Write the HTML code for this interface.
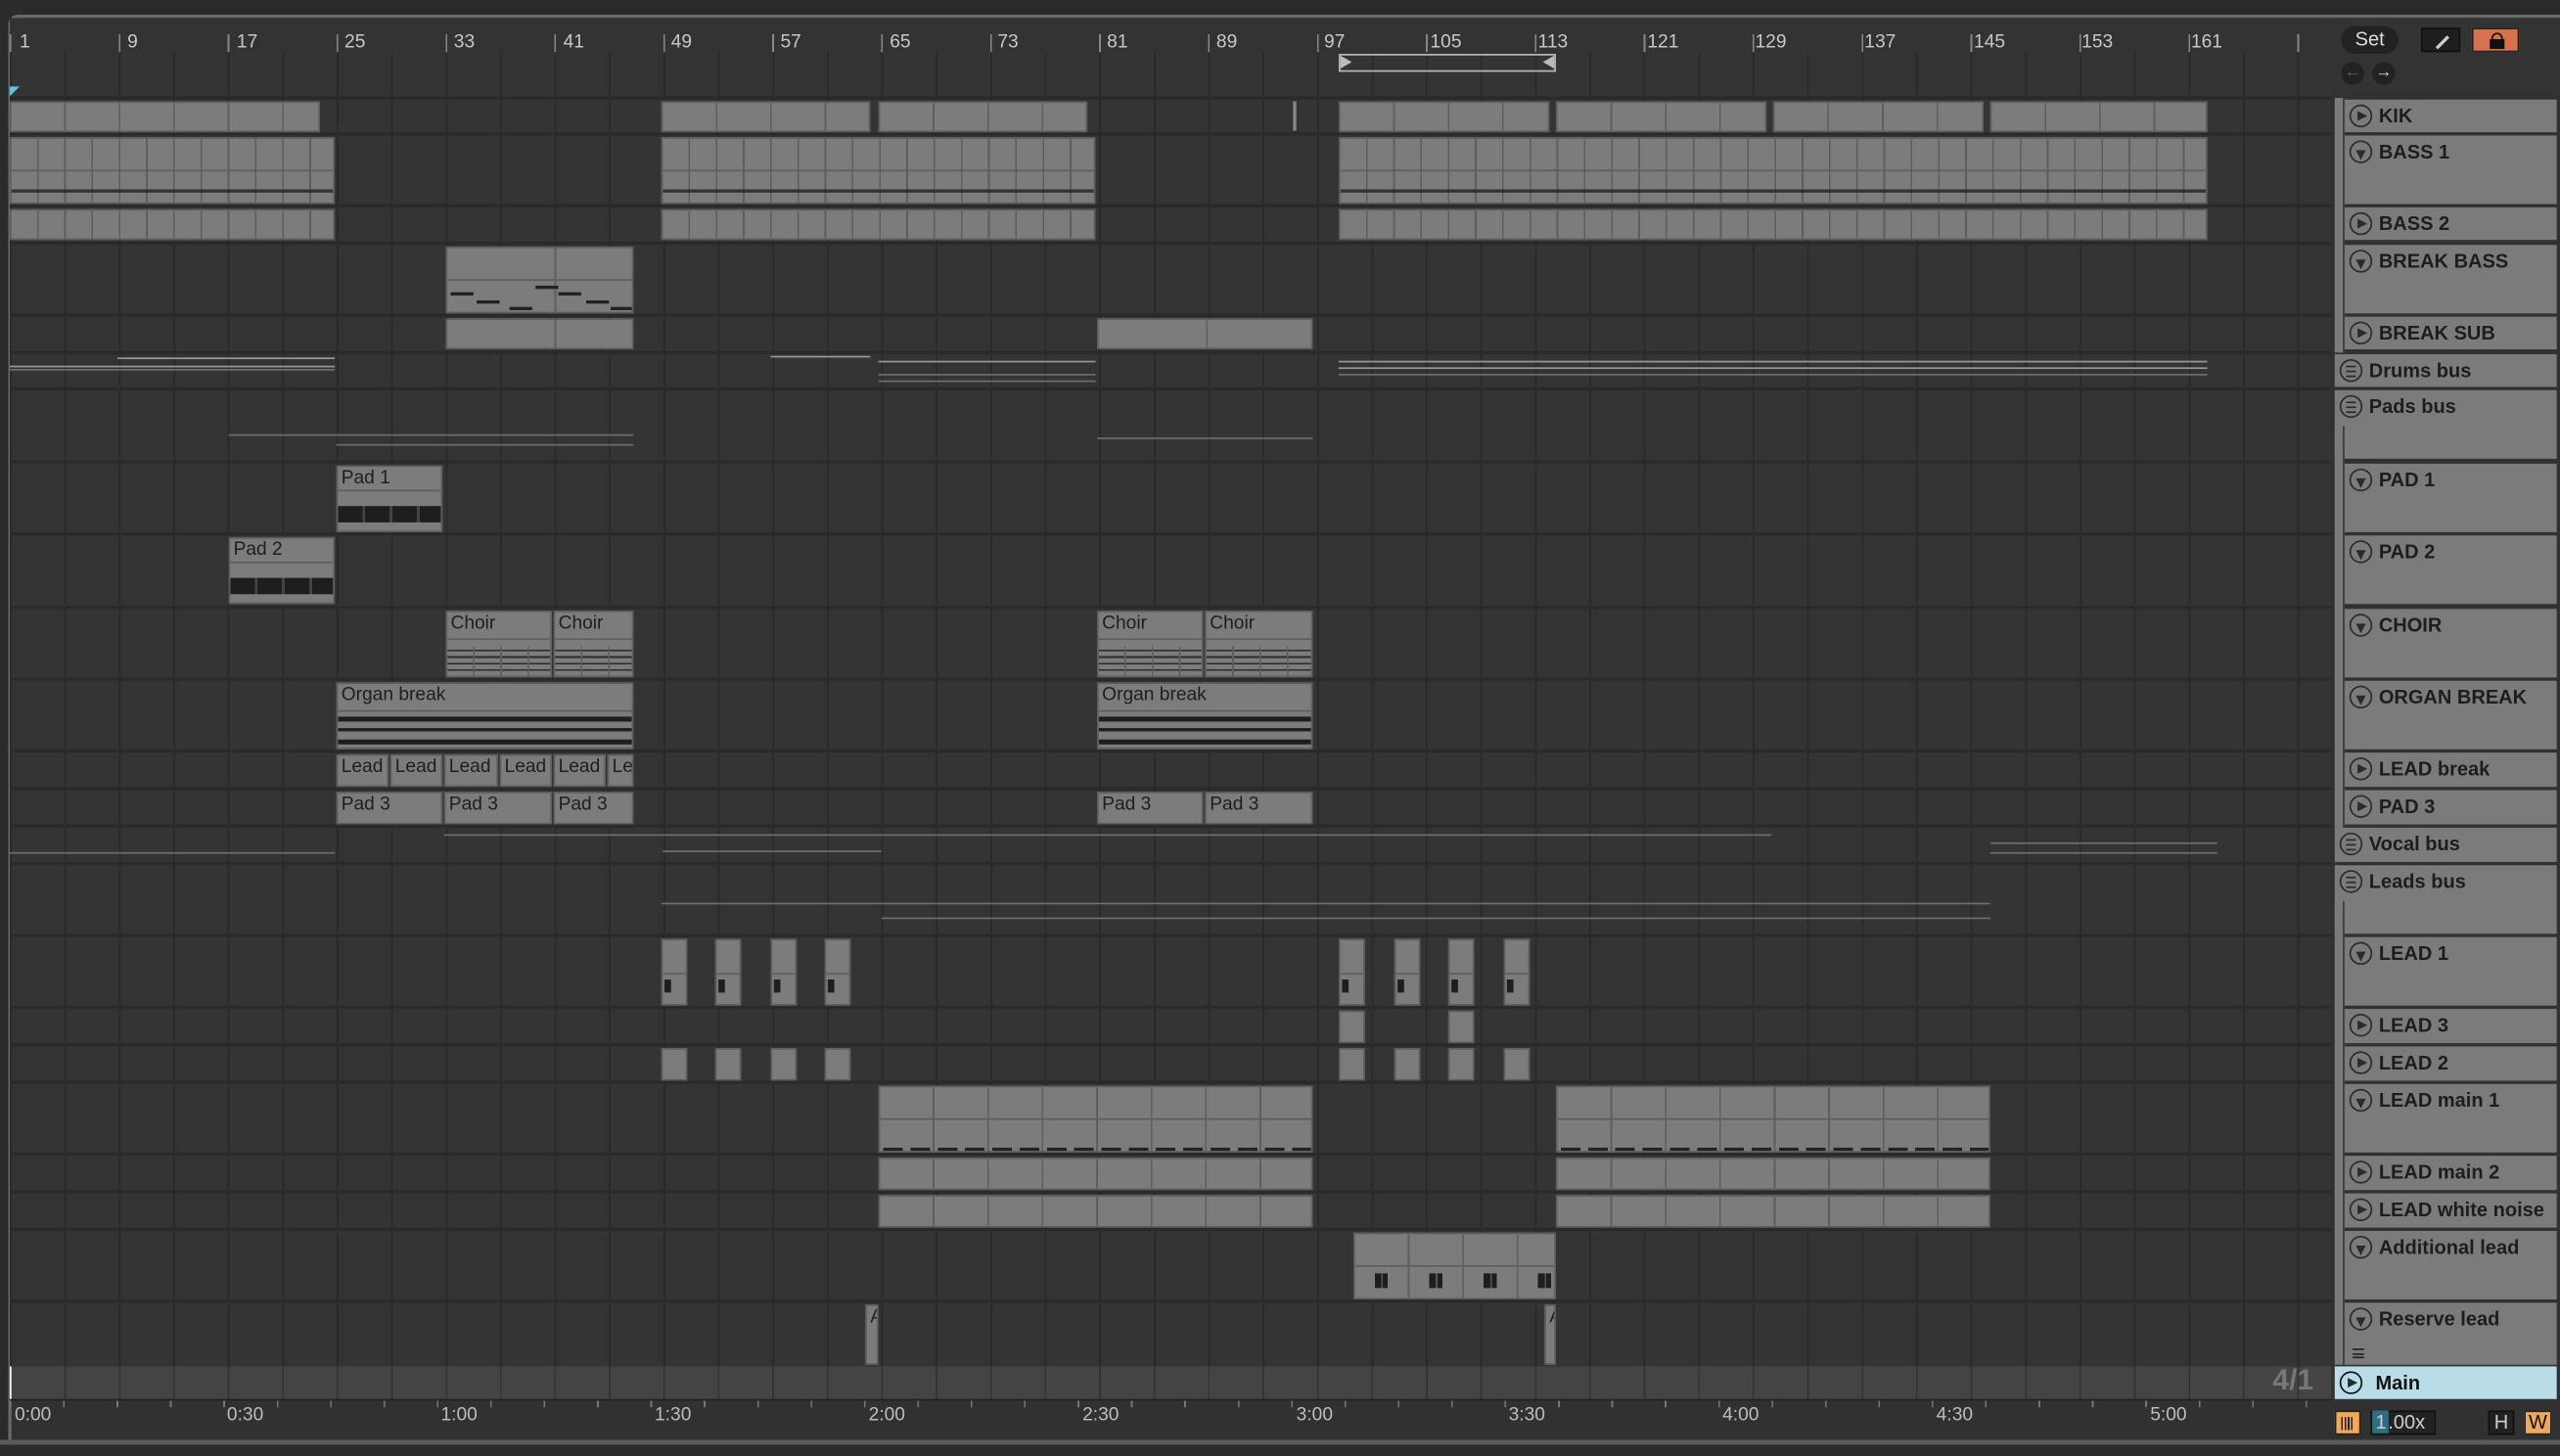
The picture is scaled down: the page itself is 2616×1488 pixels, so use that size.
<!DOCTYPE html>
<html><head><meta charset="utf-8"><style>
*{margin:0;padding:0;box-sizing:border-box}
html,body{width:2616px;height:1488px;overflow:hidden;background:#262626}
.s{position:absolute;left:0;top:0;width:1568px;height:892px;transform:scale(1.66837);transform-origin:0 0;font-family:"Liberation Sans",sans-serif;background:#2a2a2a}
.frame{position:absolute;left:5px;top:9px;width:1563px;height:875px;border-top:2px solid #6a6a6a;border-left:2px solid #6a6a6a;border-radius:6px 0 0 0;background:#313131}
.ruler{position:absolute;left:6px;top:11px;width:1422px;height:47px;background:#333}
.rl{position:absolute;top:20px;font-size:11.5px;color:#c8c8c8;white-space:nowrap}
.area{position:absolute;left:6px;top:32px;width:1422px;height:805px;
background-image:repeating-linear-gradient(90deg,#2a2a2a 0 1.2px,transparent 1.2px 33.36px);background-color:#343434}
.sep{position:absolute;left:6px;width:1422px;height:2px;background:#2a2a2a}
.c{position:absolute;background:#7c7c7c;border:1px solid #5e5e5e;overflow:hidden}
.c span{position:absolute;left:2px;top:1px;font-size:11.5px;color:#1e1e1e;white-space:nowrap}
.hd{position:absolute;left:1436px;width:130px;background:#7b7b7b;color:#1d1d1d;font-size:12px;font-weight:bold}
.hd.b{left:1430px;width:136px}
.hd i{position:absolute;left:3px;top:3px;width:14px;height:14px;border:1.3px solid #2a2a2a;border-radius:50%}
.hd i.p:after{content:"";position:absolute;left:4px;top:2.5px;border-left:6px solid #2a2a2a;border-top:3.5px solid transparent;border-bottom:3.5px solid transparent}
.hd i.d:after{content:"";position:absolute;left:2.5px;top:4.5px;border-top:6px solid #2a2a2a;border-left:3.5px solid transparent;border-right:3.5px solid transparent}
.hd i.m:after{content:"";position:absolute;left:3px;top:3px;width:6px;height:5px;border-top:1.2px solid #2a2a2a;border-bottom:1.2px solid #2a2a2a;background:linear-gradient(#2a2a2a,#2a2a2a) 0 50%/100% 1.2px no-repeat}
.hd b{position:absolute;left:21px;top:3px;font-weight:bold;white-space:nowrap}
.gl{position:absolute;left:1430px;width:6px;background:#7b7b7b;border-right:1px solid #3a3a3a}
.tl{position:absolute;top:861px;font-size:11.5px;color:#bdbdbd}
.ln{position:absolute;height:1px;background:#9a9a9a}
</style></head><body><div class="s">
<div class="frame"></div>
<div class="ruler"></div>
<div class="rl" style="left:12px">1</div><div class="rl" style="left:78px">9</div><div class="rl" style="left:145px">17</div><div class="rl" style="left:211px">25</div><div class="rl" style="left:278px">33</div><div class="rl" style="left:345px">41</div><div class="rl" style="left:411px">49</div><div class="rl" style="left:478px">57</div><div class="rl" style="left:545px">65</div><div class="rl" style="left:611px">73</div><div class="rl" style="left:678px">81</div><div class="rl" style="left:745px">89</div><div class="rl" style="left:811px">97</div><div class="rl" style="left:876px">105</div><div class="rl" style="left:942px">113</div><div class="rl" style="left:1009px">121</div><div class="rl" style="left:1075px">129</div><div class="rl" style="left:1142px">137</div><div class="rl" style="left:1209px">145</div><div class="rl" style="left:1275px">153</div><div class="rl" style="left:1342px">161</div>
<div style="position:absolute;left:6px;top:21px;width:1422px;height:11px;background-image:repeating-linear-gradient(90deg,#888 0 1px,transparent 1px 66.72px)"></div>
<div class="area" id="area"></div>
<div style="position:absolute;left:820px;top:33px;width:133px;height:11px;border:1px solid #bbb"></div>
<div style="position:absolute;left:821px;top:34px;border-left:7px solid #bbb;border-top:4px solid transparent;border-bottom:4px solid transparent"></div>
<div style="position:absolute;left:945px;top:34px;border-right:7px solid #bbb;border-top:4px solid transparent;border-bottom:4px solid transparent"></div>
<div style="position:absolute;left:6px;top:53px;border-left:6px solid #5bc4dc;border-bottom:6px solid transparent"></div>
<div id="clips"></div>
<div style="position:absolute;left:1428px;top:11px;width:140px;height:47px;background:#333"></div>
<div style="position:absolute;left:1434px;top:16px;width:35px;height:17px;border-radius:9px;background:#222;color:#ddd;font-size:12px;text-align:center;line-height:17px">Set</div>
<div style="position:absolute;left:1483px;top:17px;width:24px;height:15px;background:#1e1e1e;border:1px solid #111"><div style="position:absolute;left:7px;top:7px;width:10px;height:2px;background:#ccc;transform:rotate(-45deg)"></div></div>
<div style="position:absolute;left:1514px;top:17px;width:29px;height:15px;background:#d8714f;border:1px solid #222"><div style="position:absolute;left:10px;top:6px;width:9px;height:6px;background:#111"></div><div style="position:absolute;left:11px;top:2px;width:7px;height:6px;border:1.5px solid #111;border-radius:4px 4px 0 0"></div></div>
<div style="position:absolute;left:1434px;top:38px;width:14px;height:14px;border-radius:50%;background:#222;color:#666;font-size:10px;text-align:center;line-height:14px">&#8592;</div>
<div style="position:absolute;left:1453px;top:38px;width:14px;height:14px;border-radius:50%;background:#222;color:#ddd;font-size:10px;text-align:center;line-height:14px">&#8594;</div>
<div id="hds"></div>
<div class="gl" style="top:60px;height:156px"></div>
<div class="gl" style="top:261px;height:246px"></div>
<div class="gl" style="top:552px;height:284px"></div>
<div style="position:absolute;left:6px;top:837px;width:1422px;height:20px;background:#444;background-image:repeating-linear-gradient(90deg,#333 0 1px,transparent 1px 33.36px)"></div>
<div style="position:absolute;left:6px;top:837px;width:1px;height:20px;background:#fff"></div>
<div style="position:absolute;left:1392px;top:835px;font-size:18px;font-weight:bold;color:#777">4/1</div>
<div class="hd b" style="top:837px;height:20px;background:#b8dde8;color:#111;font-weight:bold"><i class="p" style="border-color:#111;top:3px;left:3px"></i><b style="left:25px;top:2.5px;font-size:12px">Main</b></div>
<div style="position:absolute;left:6px;top:857px;width:1422px;height:1px;background:#222"></div>
<div style="position:absolute;left:6px;top:858px;width:1422px;height:4px;background-image:repeating-linear-gradient(90deg,#777 0 1px,transparent 1px 32.7px)"></div>
<div class="tl" style="left:9px">0:00</div><div class="tl" style="left:139px">0:30</div><div class="tl" style="left:270px">1:00</div><div class="tl" style="left:401px">1:30</div><div class="tl" style="left:532px">2:00</div><div class="tl" style="left:663px">2:30</div><div class="tl" style="left:794px">3:00</div><div class="tl" style="left:924px">3:30</div><div class="tl" style="left:1055px">4:00</div><div class="tl" style="left:1186px">4:30</div><div class="tl" style="left:1317px">5:00</div>
<div style="position:absolute;left:1430px;top:864px;width:16px;height:15px;background:#f0a859;border:1px solid #222"><div style="position:absolute;left:3px;top:3px;width:8px;height:8px;background:repeating-linear-gradient(90deg,#222 0 1px,transparent 1px 2px)"></div></div>
<div style="position:absolute;left:1452px;top:864px;width:40px;height:15px;background:#222;border:1px solid #111;color:#ccc;font-size:12px;line-height:13px"><span style="background:#2e6e80;padding:0 1px 0 2px">1</span>.00x</div>
<div style="position:absolute;left:1524px;top:864px;width:16px;height:15px;background:#222;border:1px solid #111;color:#ccc;font-size:12px;text-align:center;line-height:13px">H</div>
<div style="position:absolute;left:1546px;top:864px;width:17px;height:15px;background:#f0a859;border:1px solid #222;color:#111;font-size:12px;text-align:center;line-height:13px">W</div>
<div style="position:absolute;left:0;top:882px;width:1568px;height:3px;background:#5a5a5a"></div>
<script>
var rows=[[61,20,'KIK','p',0],[83,42,'BASS 1','d',0],[127,20,'BASS 2','p',0],[150,42,'BREAK BASS','d',0],[194,20,'BREAK SUB','p',0],[217,20,'Drums bus','m',1],[239,42,'Pads  bus','m',1],[284,42,'PAD 1','d',0],[328,42,'PAD 2','d',0],[373,42,'CHOIR','d',0],[417,42,'ORGAN BREAK','d',0],[461,21,'LEAD break','p',0],[484,21,'PAD 3','p',0],[507,21,'Vocal bus','m',1],[530,42,'Leads bus','m',1],[574,42,'LEAD 1','d',0],[618,21,'LEAD 3','p',0],[641,21,'LEAD 2','p',0],[664,42,'LEAD main 1','d',0],[708,21,'LEAD main 2','p',0],[731,21,'LEAD white noise','p',0],[754,42,'Additional lead','d',0],[798,38,'Reserve lead','d',0]];
var H='',C='';
rows.forEach(function(r){H+='<div class="hd'+(r[4]?' b':'')+'" style="top:'+r[0]+'px;height:'+r[1]+'px"><i class="'+r[3]+'"></i><b>'+r[2]+'</b></div>';C+='<div class="sep" style="top:'+(r[0]-2)+'px"></div>';});
H+='<div style="position:absolute;left:1441px;top:826px;width:7px;height:6px;border-top:1px solid #222;border-bottom:1px solid #222;background:linear-gradient(#222,#222) 0 50%/100% 1px no-repeat"></div>';
document.getElementById('hds').innerHTML=H;
function c(x1,x2,y,h,lab,sub,notes){C+='<div class="c" style="left:'+x1+'px;top:'+y+'px;width:'+(x2-x1)+'px;height:'+h+'px;'+(sub?'background-image:repeating-linear-gradient(90deg,transparent 0 '+(sub-1)+'px,#5e5e5e '+(sub-1)+'px '+sub+'px);':'')+'">'+(lab?'<span>'+lab+'</span>':'')+(notes||'')+'</div>';}
var R={};rows.forEach(function(r){R[r[2]]=r;});
function row(n,x1,x2,lab,sub,notes){var r=R[n];c(x1,x2,r[0]+1,r[1]-1,lab,sub,notes);}
function segs(n,arr,sub,notes){arr.forEach(function(a){row(n,a[0],a[1],'',sub,notes);});}
segs('KIK',[[6,196],[405,533],[538,666],[820,949],[953,1082],[1086,1215],[1219,1352]],33.36);
C+='<div style="position:absolute;left:792px;top:62px;width:2px;height:18px;background:#888"></div>';
var bn='<div style="position:absolute;left:0;right:0;top:19px;height:1px;background:#5e5e5e"></div><div style="position:absolute;left:0;right:0;top:31px;height:2px;background:#222;opacity:.8"></div>';
segs('BASS 1',[[6,205],[405,671],[820,1352]],16.68,bn);
segs('BASS 2',[[6,205],[405,671],[820,1352]],16.68);
row('BREAK BASS',273,388,'',66.7,'<div style="position:absolute;left:0;right:0;top:19px;height:1px;background:#5e5e5e"></div><div style="position:absolute;left:2px;top:27px;width:14px;height:2px;background:#222"></div><div style="position:absolute;left:18px;top:32px;width:14px;height:2px;background:#222"></div><div style="position:absolute;left:38px;top:36px;width:14px;height:2px;background:#222"></div><div style="position:absolute;left:54px;top:23px;width:14px;height:2px;background:#222"></div><div style="position:absolute;left:68px;top:27px;width:14px;height:2px;background:#222"></div><div style="position:absolute;left:85px;top:32px;width:14px;height:2px;background:#222"></div><div style="position:absolute;left:100px;top:36px;width:14px;height:2px;background:#222"></div>');
segs('BREAK SUB',[[273,388],[672,804]],66.7);
[[6,205,224],[72,205,219],[472,533,218],[538,671,221],[820,1352,221],[820,1352,225]].forEach(function(a){C+='<div class="ln" style="left:'+a[0]+'px;width:'+(a[1]-a[0])+'px;top:'+a[2]+'px"></div>';});
[[6,205,226],[538,671,229],[538,671,233],[820,1352,229],[6,205,522],[272,1085,511],[406,540,521],[1219,1358,516],[1219,1358,522],[140,388,266],[206,388,272],[672,804,268],[405,1219,553],[540,1219,562]].forEach(function(a){C+='<div class="ln" style="left:'+a[0]+'px;width:'+(a[1]-a[0])+'px;top:'+a[2]+'px;background:#6e6e6e"></div>';});
var pad='<div style="position:absolute;left:0;right:0;top:14px;height:1px;background:#5e5e5e"></div><div style="position:absolute;left:0;right:0;top:24px;height:10px;background:repeating-linear-gradient(90deg,#1e1e1e 0 15px,#444 15px 16.7px)"></div>';
row('PAD 1',206,271,'Pad 1',0,pad);
row('PAD 2',140,205,'Pad 2',0,pad);
var ch='<div style="position:absolute;left:0;right:0;top:16px;height:1px;background:#5e5e5e"></div><div style="position:absolute;left:0;right:0;top:21px;height:18px;background:repeating-linear-gradient(90deg,transparent 0 15.7px,#5e5e5e 15.7px 16.7px),repeating-linear-gradient(#7c7c7c 0 2px,#2a2a2a 2px 3px,#7c7c7c 3px 4px)"></div>';
[[273,338],[339,388],[672,737],[738,804]].forEach(function(a){row('CHOIR',a[0],a[1],'Choir',0,ch);});
var og='<div style="position:absolute;left:0;right:0;top:16px;height:1px;background:#5e5e5e"></div><div style="position:absolute;left:0;right:0;top:20px;height:3px;background:#1e1e1e"></div><div style="position:absolute;left:0;right:0;top:27px;height:2px;background:#1e1e1e"></div><div style="position:absolute;left:0;right:0;top:34px;height:3px;background:#1e1e1e"></div>';
row('ORGAN BREAK',206,388,'Organ break',0,og);row('ORGAN BREAK',672,804,'Organ break',0,og);
[[206,238],[239,271],[272,305],[306,338],[339,371],[372,388]].forEach(function(a,i){row('LEAD break',a[0],a[1],i==5?'Le':'Lead');});
[[206,271],[272,338],[339,388],[672,737],[738,804]].forEach(function(a){row('PAD 3',a[0],a[1],'Pad 3');});
var l1='<div style="position:absolute;left:0;right:0;top:20px;height:1px;background:#5e5e5e"></div><div style="position:absolute;left:1px;top:24px;width:4px;height:8px;background:#1e1e1e"></div>';
[405,438,472,505,820,854,887,921].forEach(function(x){row('LEAD 1',x,x+16,'',0,l1);row('LEAD 2',x,x+16);});
[820,887].forEach(function(x){row('LEAD 3',x,x+16);});
var lm='<div style="position:absolute;left:0;right:0;top:19px;height:1px;background:#5e5e5e"></div><div style="position:absolute;left:0;right:0;top:37px;height:1.5px;background:repeating-linear-gradient(90deg,transparent 0 2px,#222 2px 14px,transparent 14px 16.7px)"></div>';
segs('LEAD main 1',[[538,804],[953,1219]],33.36,lm);
segs('LEAD main 2',[[538,804],[953,1219]],33.36);
segs('LEAD white noise',[[538,804],[953,1219]],33.36);
row('Additional lead',829,953,'',33.36,'<div style="position:absolute;left:0;right:0;top:19px;height:1px;background:#5e5e5e"></div><div style="position:absolute;left:0;right:0;top:24px;height:9px;background:repeating-linear-gradient(90deg,transparent 0 12px,#1e1e1e 12px 16px,#555 16px 17px,#1e1e1e 17px 20px,transparent 20px 33.36px)"></div>');
row('Reserve lead',530,538,'A');row('Reserve lead',946,953,'A');
document.getElementById('clips').innerHTML=C;
</script>
</div></body></html>
